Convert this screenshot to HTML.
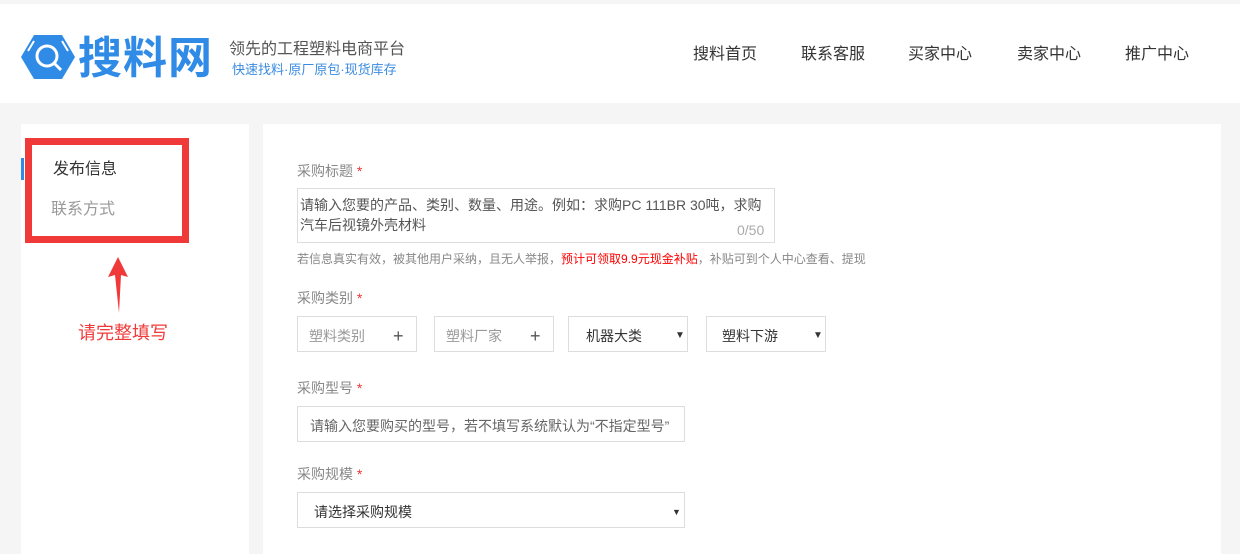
<!DOCTYPE html>
<html><head><meta charset="utf-8"><style>
*{margin:0;padding:0;box-sizing:border-box}
body{width:1240px;height:549px;overflow:hidden;background:#f5f5f5;font-family:"Liberation Sans","Noto Sans CJK SC",sans-serif;position:relative;line-height:1}
.abs{position:absolute}
.t{position:absolute;margin-top:2px}
.hdr{left:0;top:4px;width:1240px;height:99px;background:#fff}
.nav{top:45px;font-size:16px;color:#333}
.lbl{font-size:14px;color:#888}
.lbl b{color:#e33;font-weight:normal}
.box{border:1px solid #ddd;background:#fff}
.sel{font-size:14px;color:#333}
</style></head><body>
<div class="abs hdr"></div>
<svg class="abs" style="left:20px;top:34px" width="56" height="46" viewBox="0 0 56 46">
<polygon points="14,1 42,1 55,23 42,45 14,45 1,23" fill="#2f8be6"/>
<circle cx="27" cy="22" r="10" fill="none" stroke="#fff" stroke-width="3"/>
<line x1="34" y1="29" x2="41" y2="36" stroke="#fff" stroke-width="3"/>
<line x1="8" y1="17" x2="14" y2="7" stroke="#fff" stroke-width="2"/>
<line x1="48" y1="17" x2="42" y2="7" stroke="#fff" stroke-width="2"/>
</svg>
<div class="t" style="left:78px;top:35px;font-size:44px;font-weight:bold;color:#2f8be6;letter-spacing:1px">搜料网</div>
<div class="t" style="left:229px;top:40px;font-size:16px;color:#555">领先的工程塑料电商平台</div>
<div class="t" style="left:232px;top:61px;font-size:13px;color:#3a8be0">快速找料·原厂原包·现货库存</div>
<div class="t nav" style="left:693px">搜料首页</div>
<div class="t nav" style="left:801px">联系客服</div>
<div class="t nav" style="left:908px">买家中心</div>
<div class="t nav" style="left:1017px">卖家中心</div>
<div class="t nav" style="left:1125px">推广中心</div>

<div class="abs" style="left:21px;top:124px;width:228px;height:430px;background:#fff"></div>
<div class="abs" style="left:21px;top:158px;width:3px;height:22px;background:#2f8be6"></div>
<div class="t" style="left:53px;top:160px;font-size:16px;color:#333">发布信息</div>
<div class="t" style="left:51px;top:200px;font-size:16px;color:#999">联系方式</div>
<div class="abs" style="left:25px;top:138px;width:164px;height:105px;border:7px solid #f03a3a"></div>
<svg class="abs" style="left:100px;top:255px" width="36" height="60"><polygon points="18,2 8,22 15,20 19,58 21,20 28,22" fill="#f03a3a"/></svg>
<div class="t" style="left:78px;top:322px;font-size:18px;color:#f03a3a">请完整填写</div>

<div class="abs" style="left:263px;top:124px;width:958px;height:430px;background:#fff"></div>
<div class="t lbl" style="left:297px;top:162px">采购标题 <b>*</b></div>
<div class="abs box" style="left:297px;top:188px;width:478px;height:55px"></div>
<div class="t" style="left:300px;top:193px;font-size:14px;color:#555;line-height:20px;width:470px">请输入您要的产品、类别、数量、用途。例如：求购PC 111BR 30吨，求购<br>汽车后视镜外壳材料</div>
<div class="t" style="left:737px;top:221px;font-size:14px;color:#aaa">0/50</div>
<div class="t" style="left:297px;top:251px;font-size:12px;color:#888">若信息真实有效，被其他用户采纳，且无人举报，<span style="color:#f00">预计可领取9.9元现金补贴</span>，补贴可到个人中心查看、提现</div>
<div class="t lbl" style="left:297px;top:289px">采购类别 <b>*</b></div>
<div class="abs box" style="left:297px;top:316px;width:120px;height:36px"></div>
<div class="t" style="left:309px;top:327px;font-size:14px;color:#999">塑料类别</div>
<div class="t" style="left:393px;top:325px;font-size:18px;color:#555">+</div>
<div class="abs box" style="left:434px;top:316px;width:120px;height:36px"></div>
<div class="t" style="left:446px;top:327px;font-size:14px;color:#999">塑料厂家</div>
<div class="t" style="left:530px;top:325px;font-size:18px;color:#555">+</div>
<div class="abs box" style="left:568px;top:316px;width:120px;height:36px"></div>
<div class="t sel" style="left:586px;top:327px">机器大类</div>
<div class="t" style="left:675px;top:329px;font-size:10px;color:#333">▼</div>
<div class="abs box" style="left:706px;top:316px;width:120px;height:36px"></div>
<div class="t sel" style="left:722px;top:327px">塑料下游</div>
<div class="t" style="left:813px;top:329px;font-size:10px;color:#333">▼</div>
<div class="t lbl" style="left:297px;top:379px">采购型号 <b>*</b></div>
<div class="abs box" style="left:297px;top:406px;width:388px;height:36px"></div>
<div class="t" style="left:310px;top:417px;font-size:14px;color:#666">请输入您要购买的型号，若不填写系统默认为“不指定型号”</div>
<div class="t lbl" style="left:297px;top:465px">采购规模 <b>*</b></div>
<div class="abs box" style="left:297px;top:492px;width:388px;height:36px"></div>
<div class="t sel" style="left:314px;top:503px">请选择采购规模</div>
<div class="t" style="left:672px;top:506px;font-size:9px;color:#333">▼</div>
</body></html>
